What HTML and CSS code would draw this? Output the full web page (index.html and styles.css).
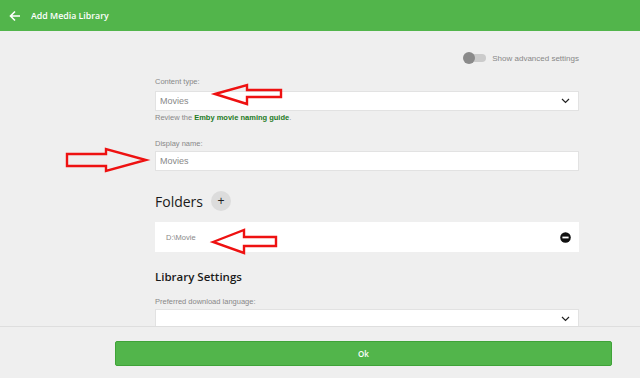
FILE: index.html
```html
<!DOCTYPE html>
<html lang="en">
<head>
    <meta charset="UTF-8">
    <meta name="viewport" content="width=device-width, initial-scale=1.0">
    <title>Add Media Library</title>
    <link rel="stylesheet" href="styles.css">
</head>
<body>

<header class="appbar">
    <svg class="back" width="12" height="12" viewBox="0 0 12 12">
        <path d="M11 6H2M6 1.5L1.5 6 6 10.5" fill="none" stroke="#fff" stroke-width="1.6"/>
    </svg>
    <span class="appbar-title">Add Media Library</span>
</header>

<div class="content">
    <div class="adv-row">
        <span class="toggle"><span class="knob"></span></span>
        <span class="adv-text">Show advanced settings</span>
    </div>

    <div class="label first">Content type:</div>
    <div class="field select">
        <span>Movies</span>
        <svg width="9" height="6" viewBox="0 0 9 6"><path d="M1 1l3.5 3.5L8 1" fill="none" stroke="#222" stroke-width="1.2"/></svg>
    </div>
    <div class="help">Review the <a href="#">Emby movie naming guide</a>.</div>

    <div class="label gap">Display name:</div>
    <div class="field"><span>Movies</span></div>

    <div class="folders-head">
        <h2>Folders</h2>
        <span class="add-btn">+</span>
    </div>
    <div class="folder-card">
        <span>D:\Movie</span>
        <svg width="11" height="11" viewBox="0 0 11 11"><circle cx="5.5" cy="5.5" r="5.3" fill="#111"/><rect x="2.4" y="4.6" width="6.2" height="1.8" fill="#fff"/></svg>
    </div>

    <h3>Library Settings</h3>
    <div class="label lang">Preferred download language:</div>
    <div class="field select">
        <span></span>
        <svg width="9" height="6" viewBox="0 0 9 6"><path d="M1 1l3.5 3.5L8 1" fill="none" stroke="#222" stroke-width="1.2"/></svg>
    </div>
</div>

<footer class="footer">
    <button class="ok-btn">Ok</button>
</footer>

<!-- red arrows drawn over the screenshot -->
<svg class="marks" width="640" height="378" viewBox="0 0 640 378">
    <g fill="none" stroke="#ee1111" stroke-width="2.4" stroke-linejoin="miter">
        <polygon points="215,94 247,85 247,90 281,90 281,97 247,97 247,104"/>
        <polygon points="67,154 106,154 106,149 146,160 106,171 106,166 67,166"/>
        <polygon points="213,242 244,230 244,237 276,237 276,246 244,246 244,253"/>
    </g>
</svg>

</body>
</html>
```

FILE: styles.css
```css
body {
    margin: 0;
    font-family: "Liberation Sans", Arial, sans-serif;
    background-color: #efefef;
    width: 640px;
    height: 378px;
    overflow: hidden;
    position: relative;
}
.appbar {
    height: 31px;
    background-color: #52b54b;
    display: flex;
    align-items: center;
    padding-left: 9px;
    color: #fff;
}
.back {
    margin-right: 10px;
}
.appbar-title {
    font-family: "Open Sans", sans-serif;
    font-weight: 600;
    font-size: 8.8px;
}
.content {
    width: 424px;
    margin-left: 155px;
    padding-top: 21px;
}
.adv-row {
    display: flex;
    justify-content: flex-end;
    align-items: center;
    height: 12px;
    gap: 6px;
}
.toggle {
    width: 21px;
    height: 8px;
    border-radius: 4px;
    background-color: #cbcbcb;
    position: relative;
}
.knob {
    position: absolute;
    left: -2px;
    top: -2px;
    width: 12px;
    height: 12px;
    border-radius: 50%;
    background-color: #8a8a8a;
}
.adv-text {
    font-size: 8px;
    color: #888;
}
.label {
    font-size: 7.5px;
    color: #888;
    height: 10px;
    line-height: 10px;
    margin-bottom: 4px;
}
.label.first {
    margin-top: 13px;
}
.label.gap {
    margin-top: 16px;
    margin-bottom: 2px;
}
.label.lang {
    margin-top: 13px;
    margin-bottom: 2px;
}
.field {
    height: 18px;
    background-color: #fff;
    border: 1px solid #e2e2e2;
    display: flex;
    align-items: center;
    justify-content: space-between;
    padding: 0 8px 0 4px;
    font-size: 9px;
    color: #888;
}
.help {
    font-size: 7.5px;
    color: #888;
    height: 10px;
    line-height: 10px;
    margin-top: 2px;
}
.help a {
    color: #237a1e;
    font-weight: 700;
    text-decoration: none;
}
.folders-head {
    display: flex;
    align-items: center;
    height: 20px;
    margin-top: 20px;
    gap: 8px;
}
.folders-head h2 {
    margin: 0;
    font-family: "Open Sans", sans-serif;
    font-weight: 400;
    font-size: 14px;
    color: #1a1a1a;
}
.add-btn {
    width: 20px;
    height: 20px;
    border-radius: 50%;
    background-color: #dcdcdc;
    display: flex;
    align-items: center;
    justify-content: center;
    font-size: 12px;
    color: #222;
}
.folder-card {
    margin-top: 11px;
    height: 30px;
    background-color: #fff;
    display: flex;
    align-items: center;
    justify-content: space-between;
    padding: 0 8px 0 11px;
    font-size: 7.5px;
    color: #888;
}
h3 {
    margin: 18px 0 0;
    height: 14px;
    line-height: 14px;
    font-family: "Open Sans", sans-serif;
    font-weight: 600;
    font-size: 11.5px;
    color: #1a1a1a;
}
.footer {
    position: absolute;
    left: 0;
    right: 0;
    bottom: 0;
    height: 52px;
    background-color: #efefef;
    border-top: 1px solid #dedede;
    padding-top: 14px;
    box-sizing: border-box;
}
.ok-btn {
    display: block;
    margin-left: 115px;
    width: 497px;
    height: 25px;
    background-color: #52b54b;
    border: 1px solid #3fa338;
    border-radius: 2px;
    color: #fff;
    font-family: "Open Sans", sans-serif;
    font-weight: 600;
    font-size: 8px;
}
.marks {
    position: absolute;
    left: 0;
    top: 0;
    pointer-events: none;
}
```
